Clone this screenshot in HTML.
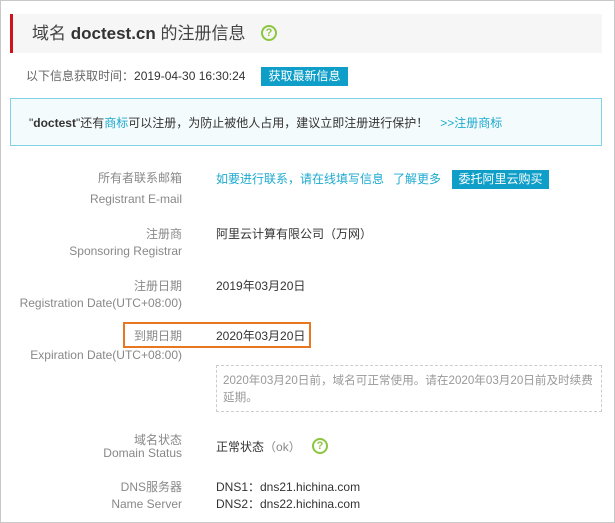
<!DOCTYPE html>
<html><head><meta charset="utf-8"><style>
*{margin:0;padding:0;box-sizing:border-box}
body{width:615px;height:523px;overflow:hidden;background:#fff;font-family:"Liberation Sans","Noto Sans CJK SC",sans-serif;font-size:12px;color:#333;position:relative}
.frame{position:absolute;left:0;top:0;width:615px;height:523px;border:1px solid #c8c8c8}
.a{position:absolute;white-space:nowrap;line-height:16px}
.lab{position:absolute;right:433px;text-align:right;color:#888;white-space:nowrap;line-height:16px}
.blue{color:#1eaad0}
.btn{position:absolute;background:#0e9ec8;color:#fff;text-align:center;line-height:18px;font-size:12px}
.q{position:absolute;width:16px;height:16px;border:2px solid #8cc63f;border-radius:50%;color:#8cc63f;font-size:11px;font-weight:bold;text-align:center;line-height:12px}
</style></head><body>
<div class="frame"></div>
<div style="position:absolute;left:10px;top:14px;width:592px;height:39px;background:#f6f6f6"></div>
<div style="position:absolute;left:10px;top:14px;width:3px;height:39px;background:#d0121a"></div>
<div class="a" style="left:32px;top:24px;font-size:17px;line-height:20px;color:#444">域名 <b style="color:#333">doctest.cn</b> 的注册信息</div>
<div class="q" style="left:261px;top:25px">?</div>
<div class="a" style="left:26px;top:68px;color:#666">以下信息获取时间：<span style="color:#333">2019-04-30 16:30:24</span></div>
<div class="btn" style="left:261px;top:67px;width:87px;height:19px">获取最新信息</div>
<div style="position:absolute;left:10px;top:98px;width:592px;height:48px;border:1px solid #7fd2e8;background:#f4fbfd"></div>
<div class="a" style="left:29px;top:115px">"<b>doctest</b>"还有<span class="blue">商标</span>可以注册，为防止被他人占用，建议立即注册进行保护！　<span class="blue">&gt;&gt;注册商标</span></div>

<div class="lab" style="top:170px">所有者联系邮箱</div>
<div class="lab" style="top:191px">Registrant E-mail</div>
<div class="a blue" style="left:216px;top:171px">如要进行联系，请在线填写信息</div>
<div class="a blue" style="left:393px;top:171px">了解更多</div>
<div class="btn" style="left:452px;top:170px;width:97px;height:19px">委托阿里云购买</div>

<div class="lab" style="top:226px">注册商</div>
<div class="lab" style="top:243px">Sponsoring Registrar</div>
<div class="a" style="left:216px;top:226px">阿里云计算有限公司（万网）</div>

<div class="lab" style="top:278px">注册日期</div>
<div class="lab" style="top:295px">Registration Date(UTC+08:00)</div>
<div class="a" style="left:216px;top:278px">2019年03月20日</div>

<div style="position:absolute;left:123px;top:322px;width:188px;height:26px;border:2px solid #e87722"></div>
<div class="lab" style="top:328px">到期日期</div>
<div class="a" style="left:216px;top:328px">2020年03月20日</div>
<div class="lab" style="top:347px">Expiration Date(UTC+08:00)</div>
<div style="position:absolute;left:216px;top:365px;width:386px;height:47px;border:1px dashed #ccc"></div>
<div class="a" style="left:223px;top:372px;color:#999;line-height:17px;font-size:11.6px">2020年03月20日前，域名可正常使用。请在2020年03月20日前及时续费<br>延期。</div>

<div class="lab" style="top:432px">域名状态</div>
<div class="lab" style="top:445px">Domain Status</div>
<div class="a" style="left:216px;top:439px">正常状态<span style="color:#888">（ok）</span></div>
<div class="q" style="left:312px;top:438px">?</div>

<div class="lab" style="top:479px">DNS服务器</div>
<div class="lab" style="top:496px">Name Server</div>
<div class="a" style="left:216px;top:479px">DNS1：dns21.hichina.com</div>
<div class="a" style="left:216px;top:496px">DNS2：dns22.hichina.com</div>
</body></html>
